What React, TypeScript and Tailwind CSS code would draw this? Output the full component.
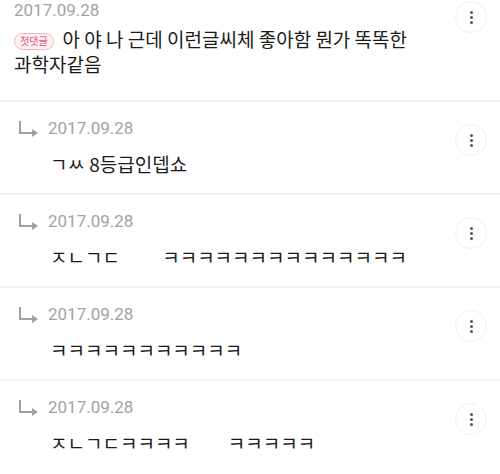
import React from 'react';

type Reply = { date: string; body: string };

const replies: Reply[] = [
  { date: '2017.09.28', body: 'ㄱㅆ 8등급인뎁쇼' },
  { date: '2017.09.28', body: 'ㅈㄴㄱㄷ\u3000\u3000 ㅋㅋㅋㅋㅋㅋㅋㅋㅋㅋㅋㅋㅋㅋ' },
  { date: '2017.09.28', body: 'ㅋㅋㅋㅋㅋㅋㅋㅋㅋㅋㅋ' },
  { date: '2017.09.28', body: 'ㅈㄴㄱㄷㅋㅋㅋㅋ\u3000\u3000ㅋㅋㅋㅋㅋ' },
];

const MoreButton: React.FC = () => (
  <button className="w-8 h-8 shrink-0 rounded-full border border-[#f0f0f0] bg-white flex flex-col items-center justify-center gap-[2px]">
    <span className="w-[3px] h-[3px] rounded-full bg-[#555]" />
    <span className="w-[3px] h-[3px] rounded-full bg-[#555]" />
    <span className="w-[3px] h-[3px] rounded-full bg-[#555]" />
  </button>
);

const ReplyArrow: React.FC = () => (
  <svg width="22" height="18" viewBox="0 0 22 18" className="shrink-0">
    <path d="M2 1 V13 H14" fill="none" stroke="#a0a0a0" strokeWidth="2" />
    <path d="M14 9 L20 13 L14 17 Z" fill="#a0a0a0" />
  </svg>
);

const App: React.FC = () => {
  return (
    <div className="w-[500px] h-[474px] bg-white overflow-hidden font-['Noto_Sans_CJK_KR',sans-serif] text-[#1a1a1a]">
      {/* First comment */}
      <div className="flex pl-[14px] pr-[13px] h-[100px]">
        <div className="flex-1">
          <div className="font-['Roboto',sans-serif] text-[17px] leading-[20px] text-[#a3a3a3]">2017.09.28</div>
          <div className="mt-[6px] pr-6 text-[19px] leading-[25px] break-keep">
            <span className="inline-flex items-center h-[17px] px-[5px] mr-[9px] align-[2px] rounded-full border border-[#f4b4bc] bg-[#fff1f3] text-[10px] leading-none text-[#e2596c]">
              첫댓글
            </span>
            아 야 나 근데 이런글씨체 좋아함 뭔가 똑똑한 과학자같음
          </div>
        </div>
        <div className="pt-[1px]">
          <MoreButton />
        </div>
      </div>

      {replies.map((r, i) => (
        <div key={i} className="flex border-t-2 border-[#f2f2f2] pl-[18px] pr-[13px] h-[93px]">
          <div className="flex-1">
            <div className="flex items-end mt-[14px] h-[22px]">
              <ReplyArrow />
              <span className="ml-[8px] font-['Roboto',sans-serif] text-[17px] leading-[20px] text-[#a3a3a3]">
                {r.date}
              </span>
            </div>
            <p className="mt-[13px] ml-[32px] text-[19px] leading-[26px] whitespace-pre">{r.body}</p>
          </div>
          <div className="pt-[22px]">
            <MoreButton />
          </div>
        </div>
      ))}
    </div>
  );
};

export default App;
